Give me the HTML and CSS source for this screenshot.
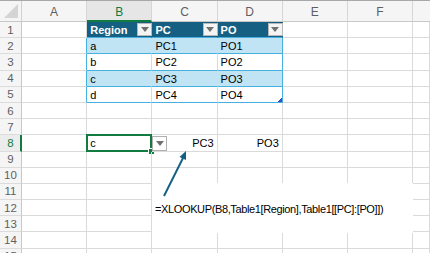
FILE: index.html
```html
<!DOCTYPE html>
<html>
<head>
<meta charset="utf-8">
<link rel="stylesheet" href="styles.css">
</head>
<body>
<div class="sheet">
  <div class="grid">
    <div class="corner"><span class="corner-tri"></span></div>
    <div class="ch">A</div>
    <div class="ch active">B</div>
    <div class="ch">C</div>
    <div class="ch">D</div>
    <div class="ch">E</div>
    <div class="ch">F</div>
    <div class="ch last"></div>

    <div class="rh">1</div>
    <div class="c"></div>
    <div class="c th"><span>Region</span><span class="filter"><span class="tri"></span></span></div>
    <div class="c th"><span>PC</span><span class="filter"><span class="tri"></span></span></div>
    <div class="c th"><span>PO</span><span class="filter"><span class="tri"></span></span></div>
    <div class="c"></div>
    <div class="c"></div>
    <div class="c"></div>

    <div class="rh">2</div>
    <div class="c tleft"></div>
    <div class="c tb">a</div>
    <div class="c tb">PC1</div>
    <div class="c tb tright">PO1</div>
    <div class="c"></div>
    <div class="c"></div>
    <div class="c"></div>

    <div class="rh">3</div>
    <div class="c tleft"></div>
    <div class="c tw">b</div>
    <div class="c tw">PC2</div>
    <div class="c tw tright">PO2</div>
    <div class="c"></div>
    <div class="c"></div>
    <div class="c"></div>

    <div class="rh">4</div>
    <div class="c tleft"></div>
    <div class="c tb">c</div>
    <div class="c tb">PC3</div>
    <div class="c tb tright">PO3</div>
    <div class="c"></div>
    <div class="c"></div>
    <div class="c"></div>

    <div class="rh">5</div>
    <div class="c tleft"></div>
    <div class="c tw">d</div>
    <div class="c tw">PC4</div>
    <div class="c tw tright corner-cell">PO4<span class="resize"></span></div>
    <div class="c"></div>
    <div class="c"></div>
    <div class="c"></div>

    <div class="rh">6</div>
    <div class="c"></div><div class="c"></div><div class="c"></div><div class="c"></div><div class="c"></div><div class="c"></div><div class="c"></div>

    <div class="rh">7</div>
    <div class="c"></div><div class="c"></div><div class="c"></div><div class="c"></div><div class="c"></div><div class="c"></div><div class="c"></div>

    <div class="rh active">8</div>
    <div class="c"></div>
    <div class="c sel">c<span class="sel-frame"></span><span class="handle"></span><span class="dd"><span class="tri"></span></span></div>
    <div class="c num">PC3</div>
    <div class="c num">PO3</div>
    <div class="c"></div>
    <div class="c"></div>
    <div class="c"></div>

    <div class="rh">9</div>
    <div class="c"></div><div class="c"></div><div class="c"></div><div class="c"></div><div class="c"></div><div class="c"></div><div class="c"></div>

    <div class="rh">10</div>
    <div class="c"></div><div class="c"></div><div class="c"></div><div class="c"></div><div class="c"></div><div class="c"></div><div class="c"></div>

    <div class="rh">11</div>
    <div class="c"></div><div class="c"></div><div class="c"></div><div class="c"></div><div class="c"></div><div class="c"></div><div class="c"></div>

    <div class="rh">12</div>
    <div class="c"></div><div class="c"></div><div class="c"></div><div class="c"></div><div class="c"></div><div class="c"></div><div class="c"></div>

    <div class="rh">13</div>
    <div class="c"></div><div class="c"></div><div class="c"></div><div class="c"></div><div class="c"></div><div class="c"></div><div class="c"></div>

    <div class="rh">14</div>
    <div class="c"></div><div class="c"></div><div class="c"></div><div class="c"></div><div class="c"></div><div class="c"></div><div class="c"></div>

    <div class="rh">15</div>
    <div class="c"></div><div class="c"></div><div class="c"></div><div class="c"></div><div class="c"></div><div class="c"></div><div class="c"></div>
  </div>

  <div class="textbox">=XLOOKUP(B8,Table1[Region],Table1[[PC]:[PO]])</div>

  <svg class="arrow" width="430" height="253" viewBox="0 0 430 253">
    <line x1="164" y1="195" x2="183" y2="157" stroke="#156082" stroke-width="2"/>
    <polygon points="186,150 179.5,156 186,159" fill="#156082"/>
  </svg>
</div>
</body>
</html>
```

FILE: styles.css
```css
html, body {
  margin: 0;
  padding: 0;
  background: #ffffff;
}

body {
  width: 430px;
  height: 253px;
  overflow: hidden;
  font-family: "Liberation Sans", Arial, sans-serif;
}

.sheet {
  position: relative;
  width: 430px;
  height: 253px;
  overflow: hidden;
  border-top: 1px solid #a8a8a8;
  box-sizing: border-box;
}

.grid {
  display: grid;
  grid-template-columns: 22px repeat(6, 65.2px) 1fr;
  grid-template-rows: 21px repeat(15, 16.2px);
}

.grid > div {
  box-sizing: border-box;
  min-width: 0;
}

.corner {
  background: #f5f5f5;
  border-right: 1px solid #d0d0d0;
  border-bottom: 1px solid #c8c8c8;
  position: relative;
}

.corner-tri {
  position: absolute;
  right: 3px;
  bottom: 3px;
  width: 0;
  height: 0;
  border-left: 14px solid transparent;
  border-bottom: 14px solid #d4d4d4;
}

.ch {
  background: #f5f5f5;
  border-right: 1px solid #d6d6d6;
  border-bottom: 1px solid #c8c8c8;
  color: #5f5f5f;
  font-size: 12px;
  display: flex;
  align-items: center;
  justify-content: center;
  padding-top: 1px;
}

.ch.active {
  background: #e6e6e6;
  color: #107c41;
  border-bottom: 2px solid #107c41;
  padding-top: 2px;
}

.ch.last {
  border-right: none;
}

.rh {
  background: #f5f5f5;
  border-right: 1px solid #c8c8c8;
  border-bottom: 1px solid #dcdcdc;
  color: #5f5f5f;
  font-size: 11.5px;
  display: flex;
  align-items: center;
  justify-content: center;
}

.rh.active {
  color: #107c41;
  border-right: 2px solid #107c41;
  background: #ececec;
  padding-left: 1px;
}

.c {
  border-right: 1px solid #dadada;
  border-bottom: 1px solid #dadada;
  font-size: 11px;
  color: #000;
  display: flex;
  align-items: center;
  padding: 1px 3px 0 3px;
  white-space: nowrap;
  position: relative;
}

.th {
  background: #156082;
  color: #ffffff;
  font-weight: bold;
  border-right-color: #156082;
  border-bottom-color: #46b0e1;
  justify-content: space-between;
  align-items: stretch;
  padding: 0 0 0 3px;
}

.th > span:first-child {
  display: flex;
  align-items: center;
  padding-top: 1px;
}

.filter {
  align-self: flex-end;
  width: 15px;
  height: 13px;
  margin-bottom: 1px;
  margin-right: -1px;
  box-sizing: border-box;
  background: #f4f4f4;
  border: 1px solid #b8b8b8;
  display: flex;
  align-items: center;
  justify-content: center;
}

.tri {
  width: 0;
  height: 0;
  border-left: 4px solid transparent;
  border-right: 4px solid transparent;
  border-top: 5px solid #707070;
}

.tleft {
  border-right-color: #46b0e1;
}

.tb {
  background: #c1e4f5;
  border-right-color: #c1e4f5;
  border-bottom-color: #46b0e1;
}

.tw {
  border-bottom-color: #46b0e1;
}

.tright {
  border-right-color: #46b0e1;
}

.resize {
  position: absolute;
  right: 0;
  bottom: 0;
  width: 4px;
  height: 4px;
  background: linear-gradient(135deg, transparent 50%, #3a4cbf 50%);
}

.num {
  justify-content: flex-end;
}

.sel-frame {
  position: absolute;
  left: -1px;
  top: -1px;
  right: -1px;
  bottom: -1px;
  border: 2px solid #107c41;
  pointer-events: none;
}

.handle {
  position: absolute;
  right: -4px;
  bottom: -4px;
  width: 5px;
  height: 5px;
  background: #107c41;
  border: 1px solid #ffffff;
}

.dd {
  position: absolute;
  left: calc(100% + 1px);
  top: 1px;
  width: 15px;
  height: 15px;
  box-sizing: border-box;
  background: #ffffff;
  border: 1px solid #b0b0b0;
  display: flex;
  align-items: center;
  justify-content: center;
}

.textbox {
  position: absolute;
  left: 152px;
  top: 182px;
  width: 261px;
  height: 50px;
  background: #ffffff;
  font-size: 11px;
  letter-spacing: -0.37px;
  color: #000;
  padding: 20px 0 0 3px;
  box-sizing: border-box;
  white-space: nowrap;
}

.arrow {
  position: absolute;
  left: 0;
  top: 0;
  pointer-events: none;
}
```
